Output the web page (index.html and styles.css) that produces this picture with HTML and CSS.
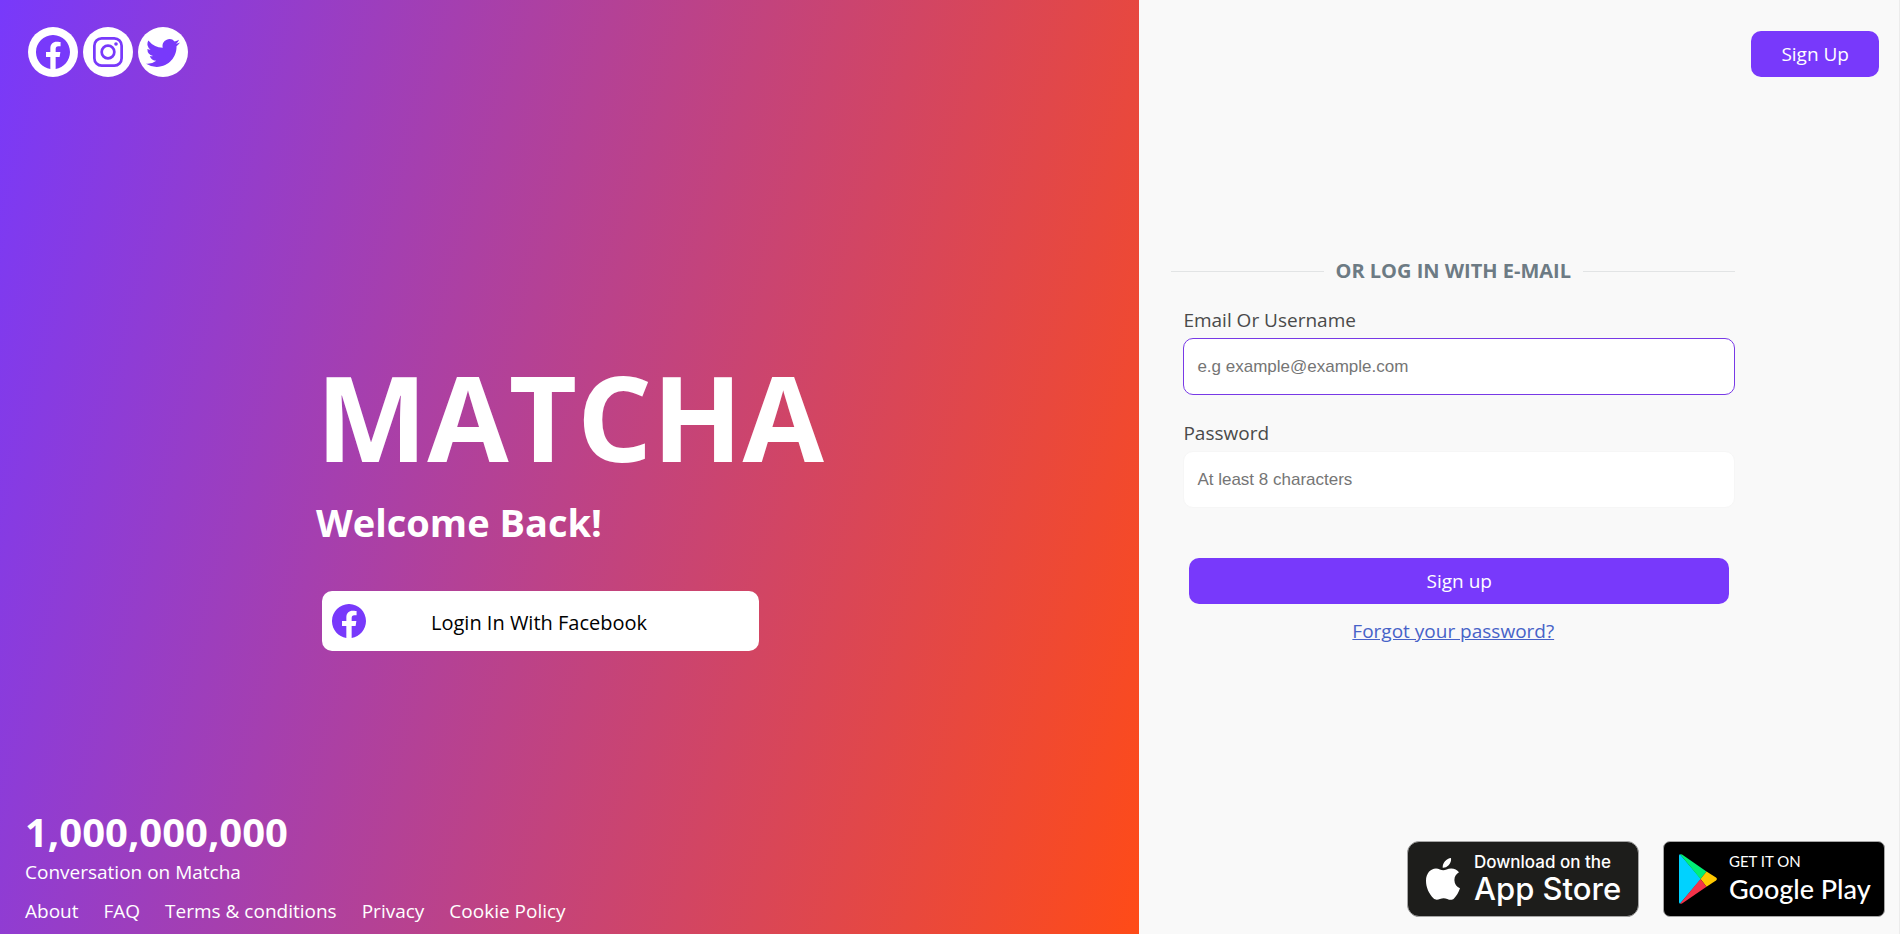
FILE: index.html
```html
<!DOCTYPE html>
<html lang="en">
<head>
<meta charset="utf-8">
<title>Matcha</title>
<link rel="stylesheet" href="styles.css">
</head>
<body>
<svg class="defs" aria-hidden="true">
  <symbol id="facebook" viewBox="0 0 16 16"><path d="M16 8.049c0-4.446-3.582-8.05-8-8.05C3.580 0-.002 3.603-.002 8.050c0 4.017 2.926 7.347 6.750 7.951v-5.625h-2.030V8.050H6.750V6.275c0-2.017 1.195-3.131 3.022-3.131.876 0 1.791.157 1.791.157v1.980h-1.009c-.993 0-1.303.621-1.303 1.258v1.510h2.218l-.354 2.326H9.250V16c3.824-.604 6.750-3.934 6.750-7.951z"/></symbol>
  <symbol id="instagram" viewBox="0 0 16 16"><g fill="none" stroke="currentColor" stroke-width="1.450"><rect x=".73" y=".73" width="14.540" height="14.540" rx="3.900"/><circle cx="8" cy="8" r="3.380"/></g><circle cx="12.270" cy="3.730" r=".96"/></symbol>
  <symbol id="twitter" viewBox="0 0 16 16"><path d="M5.026 15c6.038 0 9.341-5.003 9.341-9.334 0-.14 0-.282-.006-.422A6.685 6.685 0 0 0 16 3.542a6.658 6.658 0 0 1-1.889.518 3.301 3.301 0 0 0 1.447-1.817 6.533 6.533 0 0 1-2.087.793A3.286 3.286 0 0 0 7.875 6.030a9.325 9.325 0 0 1-6.767-3.429 3.289 3.289 0 0 0 1.018 4.382A3.323 3.323 0 0 1 .64 6.575v.045a3.288 3.288 0 0 0 2.632 3.218 3.203 3.203 0 0 1-.865.115 3.230 3.230 0 0 1-.614-.057 3.283 3.283 0 0 0 3.067 2.277A6.588 6.588 0 0 1 .78 13.580a6.320 6.320 0 0 1-.78-.045A9.344 9.344 0 0 0 5.026 15z"/></symbol>
</svg>
<div class="page">
  <section class="hero">
    <nav class="social" aria-label="Social media">
      <a href="#" aria-label="Facebook"><svg><use href="#facebook"/></svg></a>
      <a href="#" aria-label="Instagram"><svg class="small"><use href="#instagram"/></svg></a>
      <a href="#" aria-label="Twitter"><svg><use href="#twitter"/></svg></a>
    </nav>
    <div class="brand">
      <h1>MATCHA</h1>
      <h2>Welcome Back!</h2>
      <button class="fb-login" type="button"><svg aria-hidden="true"><use href="#facebook"/></svg><span>Login In With Facebook</span></button>
    </div>
    <footer class="stats">
      <strong>1,000,000,000</strong>
      <p>Conversation on Matcha</p>
      <nav class="links" aria-label="Footer">
        <a href="#">About</a><a href="#">FAQ</a><a href="#">Terms &amp; conditions</a><a href="#">Privacy</a><a href="#">Cookie Policy</a>
      </nav>
    </footer>
  </section>
  <main class="login">
    <header class="top"><button class="primary" type="button">Sign Up</button></header>
    <form class="form">
      <div class="divider">OR LOG IN WITH E-MAIL</div>
      <div class="fields">
        <label for="user">Email Or Username</label>
        <input class="active" id="user" type="text" placeholder="e.g example@example.com">
        <label for="password">Password</label>
        <input id="password" type="password" placeholder="At least 8 characters">
      </div>
      <button class="primary submit" type="submit">Sign up</button>
      <a class="forgot" href="#">Forgot your password?</a>
    </form>
    <div class="stores">
      <a class="store apple" href="#">
        <svg viewBox="0 0 34 42" aria-hidden="true"><path d="M25 0c.4 3-.7 5.400-2.400 7.200-1.700 1.800-3.700 2.600-5.900 2.500C16.500 7.300 17.500 5 19 3.300 20.600 1.500 23 .2 25 0zM33 14.300c-3 2-4.700 4.500-4.600 8 .1 4 2.300 6.700 5.600 8-1.500 4.300-3.300 7.500-6 10.200-2.300 2.200-4.600 1.300-6.700.4-2.500-1-4.700-1-7.400 0-2.300.9-4.400 1.300-6.500-.7C3 36 0 29.500 0 22.800c0-7.500 4.500-12.200 10-12.300 2.900 0 5 1.800 7.300 1.800 2.100 0 4.200-1.900 7.900-1.900 3.200.1 6.100 1.500 7.800 3.900z"/></svg>
        <span class="words"><small>Download on the</small><b>App Store</b></span>
      </a>
      <a class="store google" href="#">
        <svg viewBox="0 0 38 50" aria-hidden="true"><path fill="#00d2ff" d="M0 2Q0 .6 1 .3L22 25 1 49.700Q0 49.300 0 48z"/><path fill="#00f076" d="M1 .3Q2 0 3 .6L27.500 17.500 21.500 25z"/><path fill="#ffc900" d="M27.500 17.500 37 23.600Q38.800 25 37 26.400L27.500 32.700 21.500 25z"/><path fill="#f4334a" d="M1 49.700Q2 50 3 49.400L27.500 32.700 21.500 25z"/></svg>
        <span class="words"><small>GET IT ON</small><b>Google Play</b></span>
      </a>
    </div>
  </main>
</div>
</body>
</html>
```
FILE: styles.css
```css
* { box-sizing: border-box; }
body { margin: 0; font-family: "Segoe UI", "Open Sans", "Noto Sans", sans-serif; font-size: 19px; line-height: 26px; background: #f9f9f9; }
h1, h2, p { margin: 0; }
a { color: inherit; text-decoration: none; }
button, input { border: 0; font: inherit; }
svg { display: block; fill: currentColor; }
.defs { position: absolute; width: 0; height: 0; }

.page { display: grid; grid-template-columns: 60% 1fr; min-height: 100vh; border-right: 1px solid #ececec; }

.hero { display: flex; flex-direction: column; justify-content: space-between; padding: 27px 25px 10px; color: #fff; background: linear-gradient(105deg, #7839fb, #ff4b17); }
.social { display: flex; gap: 5px; padding-left: 3px; }
.social a { display: grid; place-items: center; width: 50px; height: 50px; border-radius: 50%; background: #fff; color: #7839fb; }
.social svg { width: 34px; height: 34px; }
.social svg.small { width: 30px; height: 30px; }

.brand { display: flex; flex-direction: column; align-items: flex-start; padding: 108px 0 0 291px; }
h1 { font-size: 118px; line-height: 156px; }
h2 { font-size: 38px; line-height: 54px; }
.fb-login { display: flex; align-items: center; width: 437px; height: 60px; margin: 42px 0 0 6px; padding: 0 10px; border-radius: 10px; background: #fff; color: #000; font-size: 20px; }
.fb-login svg { width: 34px; height: 34px; color: #7839fb; }
.fb-login span { padding: 3px 0 0 65px; }

.stats strong { display: block; font-size: 40px; line-height: 54px; }
.stats p { margin-bottom: 13px; }
.links { display: flex; gap: 25px; }

.login { display: flex; flex-direction: column; justify-content: space-between; padding: 31px 14px 17px 32px; }
.top { display: flex; justify-content: flex-end; padding-right: 6px; }
.primary { padding: 10px 30px; border-radius: 10px; background: #7839fb; color: #fff; }
.form { display: flex; flex-direction: column; width: 79%; padding-bottom: 16px; }
.divider { display: flex; align-items: center; gap: 12px; color: #6d7b84; font-size: 20px; font-weight: 700; }
.divider::before, .divider::after { content: ""; flex: 1; height: 1px; background: #e2e4e5; }
.fields { display: flex; flex-direction: column; padding: 23px 0 50px 12px; color: #4a4a4a; }
.fields input { height: 57px; margin: 5px 0 25px; padding: 0 13px; border: 1px solid #f6f6f6; border-radius: 10px; background: #fff; font-family: Arial, "Liberation Sans", sans-serif; font-size: 17px; }
.fields input:last-child { margin-bottom: 0; }
.fields .active { border-color: #7839e6; }
.fields input::placeholder { color: #757575; opacity: 1; }
.submit { margin: 0 6px 0 18px; }
.forgot { align-self: center; margin-top: 14px; color: #4762c8; font-size: 19px; text-decoration: underline; }

.stores { display: flex; justify-content: flex-end; gap: 24px; }
.store { display: flex; align-items: center; height: 76px; border: 1px solid #a6a6a6; color: #fff; white-space: nowrap; }
.words { display: flex; flex-direction: column; }
.words b { font-weight: 500; }
.apple { width: 232px; padding-left: 18px; gap: 14px; border-radius: 12px; background: #1d1d1b; font-family: Inter, sans-serif; }
.apple svg { width: 34px; height: 42px; }
.apple small { font-size: 17px; line-height: 20px; font-weight: 500; }
.apple b { font-size: 31px; line-height: 34px; }
.google { width: 222px; padding-left: 15px; gap: 12px; border-radius: 7px; background: #000; font-family: Lato, sans-serif; }
.google svg { width: 38px; height: 50px; }
.google small { font-size: 15px; line-height: 20px; }
.google b { font-size: 27px; line-height: 36px; }
```
